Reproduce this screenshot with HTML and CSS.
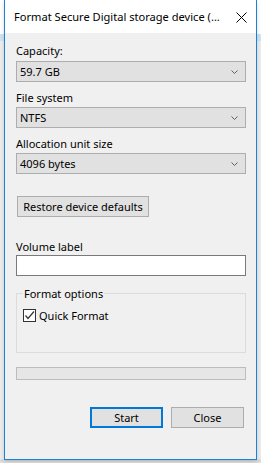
FILE: index.html
```html
<!DOCTYPE html>
<html lang="en">
<head>
  <meta charset="UTF-8">
  <title>Format Secure Digital storage device</title>
  <link rel="stylesheet" href="styles.css">
</head>
<body>
  <div class="window">
    <div class="titlebar">
      <span class="title">Format Secure Digital storage device (...</span>
      <svg class="close" width="11" height="11" viewBox="0 0 11 11">
        <path d="M0.5 0.5 L10.5 10.5 M10.5 0.5 L0.5 10.5" stroke="#000" stroke-width="1" fill="none"/>
      </svg>
    </div>

    <div class="content">
      <div class="label first">Capacity:</div>
      <div class="combo">
        <span>59.7 GB</span>
        <svg width="7" height="4" viewBox="0 0 7 4"><path d="M0.5 0.5 L3.5 3.5 L6.5 0.5" stroke="#606060" fill="none"/></svg>
      </div>

      <div class="label">File system</div>
      <div class="combo">
        <span>NTFS</span>
        <svg width="7" height="4" viewBox="0 0 7 4"><path d="M0.5 0.5 L3.5 3.5 L6.5 0.5" stroke="#606060" fill="none"/></svg>
      </div>

      <div class="label">Allocation unit size</div>
      <div class="combo">
        <span>4096 bytes</span>
        <svg width="7" height="4" viewBox="0 0 7 4"><path d="M0.5 0.5 L3.5 3.5 L6.5 0.5" stroke="#606060" fill="none"/></svg>
      </div>

      <div class="btn restore">Restore device defaults</div>

      <div class="label volume">Volume label</div>
      <div class="textbox"></div>

      <fieldset class="group">
        <legend>Format options</legend>
        <div class="check-row">
          <span class="checkbox">
            <svg width="11" height="11" viewBox="0 0 11 11"><path d="M1.5 5.5 L4 8.5 L10 1.5" stroke="#333" stroke-width="1.2" fill="none"/></svg>
          </span>
          <span>Quick Format</span>
        </div>
      </fieldset>

      <div class="progress"></div>

      <div class="actions">
        <div class="btn default">Start</div>
        <div class="btn">Close</div>
      </div>
    </div>
  </div>
</body>
</html>
```

FILE: styles.css
```css
html, body {
  margin: 0;
  padding: 0;
}

body {
  width: 261px;
  height: 463px;
  overflow: hidden;
  font-family: "Noto Sans", "Open Sans", sans-serif;
  font-size: 11px;
  color: #000;
  background: linear-gradient(to bottom, #ffffff 0, #ffffff 34px, #cde3f5 34px, #cde3f5 41px, #ececec 41px, #ececec 459px, #d6d6d6 460px, #e4e4e4 463px);
}

.window {
  margin-left: 4px;
  width: 251px;
  height: 459px;
  border: 1px solid #1883d7;
  border-top: none;
  background: #f0f0f0;
  box-shadow: 0 2px 4px rgba(0, 0, 0, 0.15);
}

.titlebar {
  height: 33px;
  background: #fff;
  display: flex;
  align-items: center;
  justify-content: space-between;
  padding: 0 9px 0 9px;
}

.title {
  font-size: 11.1px;
  white-space: nowrap;
}

.close {
  display: block;
  margin-top: 1px;
}

.content {
  padding: 10px 10px 0 11px;
}

.label {
  line-height: 15px;
  margin-top: 8px;
  margin-bottom: 2px;
}

.label.first {
  margin-top: 0;
  margin-bottom: 3px;
}

.combo {
  height: 19px;
  border: 1px solid #adadad;
  background: #e1e1e1;
  display: flex;
  align-items: center;
  justify-content: space-between;
  padding: 0 7px 0 3px;
}

.combo svg {
  display: block;
}

.btn {
  height: 19px;
  border: 1px solid #adadad;
  background: #e1e1e1;
  display: flex;
  align-items: center;
  justify-content: center;
  box-sizing: content-box;
}

.restore {
  margin: 22px 0 0 1px;
  width: 130px;
}

.label.volume {
  margin-top: 22px;
  margin-bottom: 1px;
}

.textbox {
  height: 19px;
  border: 1px solid #7a7a7a;
  background: #fff;
}

.group {
  margin: 10px 0 0 0;
  padding: 0 6px;
  border: 1px solid #dcdcdc;
  box-sizing: border-box;
  height: 67px;
}

.group legend {
  padding: 0 1px;
  line-height: 15px;
}

.check-row {
  display: flex;
  align-items: center;
  gap: 3px;
  margin-top: 7px;
}

.checkbox {
  width: 11px;
  height: 11px;
  border: 1px solid #333;
  background: #fff;
  display: flex;
}

.progress {
  margin-top: 14px;
  height: 11px;
  border: 1px solid #bcbcbc;
  background: #e6e6e6;
}

.actions {
  margin-top: 27px;
  display: flex;
  justify-content: flex-end;
  gap: 8px;
  padding-right: 2px;
}

.actions .btn {
  width: 71px;
}

.actions .btn.default {
  border: 2px solid #0078d7;
  height: 17px;
  width: 69px;
}
```
